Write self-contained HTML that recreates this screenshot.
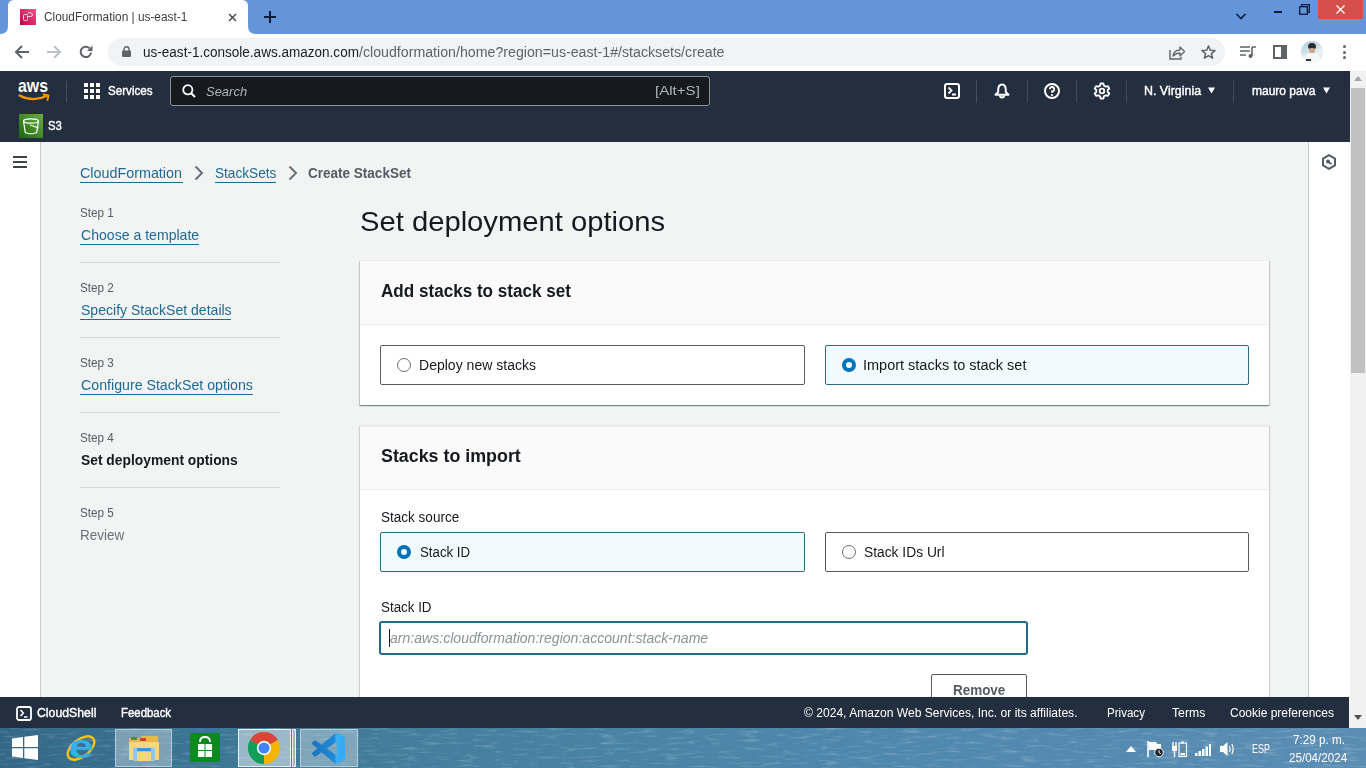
<!DOCTYPE html>
<html><head><meta charset="utf-8"><style>
*{margin:0;padding:0;box-sizing:border-box}
html,body{width:1366px;height:768px;overflow:hidden}
body{position:relative;background:#f2f3f3;font-family:"Liberation Sans",sans-serif}
.a{position:absolute}
.t{position:absolute;z-index:5;white-space:nowrap;transform-origin:0 0;font-family:"Liberation Sans",sans-serif}
svg{position:absolute;overflow:visible}
</style></head><body>
<!-- Chrome tab strip -->
<div class="a" style="left:0;top:0;width:1366px;height:34px;background:#6495da"></div>
<svg style="left:0;top:0" width="270" height="34"><path d="M0 34 Q8 34 8 26 L8 6 Q8 0 14 0 L242 0 Q248 0 248 6 L248 26 Q248 34 256 34 Z" fill="#fff"/></svg>
<!-- favicon -->
<svg style="left:20px;top:9px" width="16" height="16" viewBox="0 0 16 16"><defs><linearGradient id="fg" x1="0" y1="1" x2="1" y2="0"><stop offset="0" stop-color="#b0084d"/><stop offset="1" stop-color="#ff4f8b"/></linearGradient></defs><rect width="16" height="16" fill="url(#fg)"/><rect x="3.5" y="5.5" width="4" height="6" rx="1" fill="none" stroke="#ffd0e0" stroke-width="1"/><path d="M7.5 4.5 Q9 2.5 10.5 4 Q12.5 4 12.5 6 Q12.5 7.5 10.5 7.5 L7.5 7.5" fill="none" stroke="#ffd0e0" stroke-width="1"/></svg>
<!-- tab close -->
<svg style="left:228px;top:13px" width="9" height="9" viewBox="0 0 9 9"><path d="M1 1L8 8M8 1L1 8" stroke="#3c4043" stroke-width="1.4"/></svg>
<!-- new tab plus -->
<svg style="left:264px;top:11px" width="12" height="12" viewBox="0 0 12 12"><path d="M6 0V12M0 6H12" stroke="#0b1b3a" stroke-width="2"/></svg>
<!-- window controls -->
<svg style="left:1236px;top:13px" width="10" height="7" viewBox="0 0 10 7"><path d="M0.5 1L5 5.5L9.5 1" fill="none" stroke="#0b1b3a" stroke-width="1.6"/></svg>
<div class="a" style="left:1274px;top:11px;width:8px;height:2px;background:#0b1b3a"></div>
<svg style="left:1299px;top:4px" width="11" height="11" viewBox="0 0 11 11"><rect x="0.7" y="2.7" width="7.6" height="7.6" fill="none" stroke="#0b1b3a" stroke-width="1.3"/><path d="M2.7 2.7V0.7H10.3V8.3H8.3" fill="none" stroke="#0b1b3a" stroke-width="1.3"/></svg>
<div class="a" style="left:1318px;top:0;width:45px;height:19px;background:#d6504b"></div>
<svg style="left:1336px;top:5px" width="9" height="9" viewBox="0 0 9 9"><path d="M0.5 0.5L8.5 8.5M8.5 0.5L0.5 8.5" stroke="#fff" stroke-width="1.3"/></svg>
<!-- toolbar -->
<div class="a" style="left:0;top:34px;width:1366px;height:37px;background:#fff"></div>
<svg style="left:15px;top:45px" width="14" height="14" viewBox="0 0 14 14"><path d="M14 7H1.5M7 1L1 7L7 13" fill="none" stroke="#5f6368" stroke-width="2"/></svg>
<svg style="left:47px;top:45px" width="14" height="14" viewBox="0 0 14 14"><path d="M0 7H12.5M7 1L13 7L7 13" fill="none" stroke="#bdc1c6" stroke-width="2"/></svg>
<svg style="left:79px;top:45px" width="14" height="14" viewBox="0 0 14 14"><path d="M12 7.5A5.2 5.2 0 1 1 10.5 3.2" fill="none" stroke="#5f6368" stroke-width="2"/><path d="M13.5 0.5V6H8Z" fill="#5f6368"/></svg>
<div class="a" style="left:108px;top:38px;width:1117px;height:28px;border-radius:14px;background:#f1f3f4"></div>
<svg style="left:122px;top:46px" width="9" height="11" viewBox="0 0 9 11"><path d="M2 5V3.3A2.5 2.5 0 0 1 7 3.3V5" fill="none" stroke="#5f6368" stroke-width="1.4"/><rect x="0" y="4.5" width="9" height="6.5" rx="1" fill="#5f6368"/></svg>
<svg style="left:1169px;top:45px" width="16" height="15" viewBox="0 0 16 15"><path d="M1 5V14H12V12" fill="none" stroke="#5f6368" stroke-width="1.4"/><path d="M4 11Q5 5 11 5V2L15.5 6.5L11 11V8Q7 8 4 11Z" fill="none" stroke="#5f6368" stroke-width="1.3" stroke-linejoin="round"/></svg>
<svg style="left:1201px;top:45px" width="15" height="14" viewBox="0 0 15 14"><path d="M7.5 1L9.3 5.3L14 5.6L10.4 8.6L11.6 13.2L7.5 10.6L3.4 13.2L4.6 8.6L1 5.6L5.7 5.3Z" fill="none" stroke="#5f6368" stroke-width="1.5" stroke-linejoin="round"/></svg>
<svg style="left:1240px;top:46px" width="16" height="12" viewBox="0 0 16 12"><path d="M0 1H10M0 5H10M0 9H6M12 1H16M12 1V10" fill="none" stroke="#5f6368" stroke-width="1.6"/><circle cx="10.5" cy="10" r="2" fill="#5f6368"/></svg>
<svg style="left:1273px;top:45px" width="14" height="14" viewBox="0 0 14 14"><rect x="1" y="1" width="12" height="12" fill="none" stroke="#5f6368" stroke-width="2"/><rect x="8" y="1" width="5" height="12" fill="#5f6368"/></svg>
<div class="a" style="left:1301px;top:41px;width:22px;height:22px;border-radius:50%;overflow:hidden;background:linear-gradient(160deg,#a9c8de 0%,#cfe0ea 40%,#eef2f4 60%,#d8dee2 100%)"><div class="a" style="left:7px;top:2px;width:8px;height:6px;border-radius:4px 4px 2px 2px;background:#2b2b2b"></div><div class="a" style="left:8px;top:7px;width:6px;height:5px;border-radius:2px;background:#c9a58a"></div><div class="a" style="left:4px;top:12px;width:15px;height:12px;border-radius:6px 6px 0 0;background:#f4f6f7"></div><div class="a" style="left:5px;top:18px;width:5px;height:2px;background:#333"></div></div>
<div class="a" style="left:1343px;top:45px;width:3px;height:3px;border-radius:50%;background:#5f6368"></div>
<div class="a" style="left:1343px;top:51px;width:3px;height:3px;border-radius:50%;background:#5f6368"></div>
<div class="a" style="left:1343px;top:56px;width:3px;height:3px;border-radius:50%;background:#5f6368"></div>
<!-- AWS nav -->
<div class="a" style="left:0;top:71px;width:1350px;height:71px;background:#232f3e"></div>
<svg style="left:18px;top:80px" width="33" height="22" viewBox="0 0 33 22"><text x="0" y="12" font-family="Liberation Sans" font-weight="700" font-size="19" fill="#fff" textLength="30" lengthAdjust="spacingAndGlyphs">aws</text><path d="M1.5 15.5Q15 22.5 28.5 16" fill="none" stroke="#f90" stroke-width="2.2" stroke-linecap="round"/><path d="M25.5 14.5L30.5 15.5L29.5 20" fill="none" stroke="#f90" stroke-width="1.8" stroke-linecap="round"/></svg>
<div class="a" style="left:66px;top:81px;width:1px;height:21px;background:#414d5c"></div>
<svg style="left:84px;top:83px" width="16" height="16" viewBox="0 0 16 16" fill="#fff"><rect x="0" y="0" width="4" height="4"/><rect x="6" y="0" width="4" height="4"/><rect x="12" y="0" width="4" height="4"/><rect x="0" y="6" width="4" height="4"/><rect x="6" y="6" width="4" height="4"/><rect x="12" y="6" width="4" height="4"/><rect x="0" y="12" width="4" height="4"/><rect x="6" y="12" width="4" height="4"/><rect x="12" y="12" width="4" height="4"/></svg>
<div class="a" style="left:170px;top:76px;width:540px;height:30px;background:#16191f;border:1px solid #879596;border-radius:3px"></div>
<svg style="left:182px;top:84px" width="14" height="14" viewBox="0 0 14 14"><circle cx="5.8" cy="5.8" r="4.6" fill="none" stroke="#fff" stroke-width="1.8"/><path d="M9.2 9.2L13 13" stroke="#fff" stroke-width="2"/></svg>
<!-- right nav icons -->
<svg style="left:944px;top:83px" width="16" height="16" viewBox="0 0 16 16"><rect x="1" y="1" width="14" height="14" rx="2" fill="none" stroke="#fff" stroke-width="2"/><path d="M4.5 4.5L7.5 7.5L4.5 10.5M8 11.5H12" fill="none" stroke="#fff" stroke-width="1.8"/></svg>
<div class="a" style="left:976px;top:80px;width:1px;height:23px;background:#414d5c"></div>
<svg style="left:994px;top:83px" width="16" height="16" viewBox="0 0 16 16"><path d="M8 1.5C5 1.5 4.2 4.5 4.2 7V9L1.5 11.8H14.5L11.8 9V7C11.8 4.5 11 1.5 8 1.5Z" fill="none" stroke="#fff" stroke-width="2" stroke-linejoin="round"/><path d="M6 12.5A2 2 0 0 0 10 12.5" fill="none" stroke="#fff" stroke-width="2"/></svg>
<div class="a" style="left:1027px;top:80px;width:1px;height:23px;background:#414d5c"></div>
<svg style="left:1044px;top:83px" width="16" height="16" viewBox="0 0 16 16"><circle cx="8" cy="8" r="7" fill="none" stroke="#fff" stroke-width="2"/><path d="M5.8 6.2A2.2 2.2 0 1 1 8 8.4V9.8" fill="none" stroke="#fff" stroke-width="1.8"/><circle cx="8" cy="12" r="1.1" fill="#fff"/></svg>
<div class="a" style="left:1076px;top:80px;width:1px;height:23px;background:#414d5c"></div>
<svg style="left:1094px;top:83px" width="16" height="16" viewBox="0 0 16 16"><path d="M6.6 1H9.4L9.9 3.1L11.8 4.2L13.9 3.6L15.3 6L13.7 7.5V9.5L15.3 11L13.9 13.4L11.8 12.8L9.9 13.9L9.4 16H6.6L6.1 13.9L4.2 12.8L2.1 13.4L0.7 11L2.3 9.5V7.5L0.7 6L2.1 3.6L4.2 4.2L6.1 3.1Z" transform="translate(0 -0.5)" fill="none" stroke="#fff" stroke-width="1.8" stroke-linejoin="round"/><circle cx="8" cy="8" r="2.3" fill="none" stroke="#fff" stroke-width="1.8"/></svg>
<div class="a" style="left:1126px;top:80px;width:1px;height:23px;background:#414d5c"></div>
<svg style="left:1208px;top:87px" width="7" height="7" viewBox="0 0 7 7"><path d="M0 0.5H7L3.5 6.5Z" fill="#fff"/></svg>
<div class="a" style="left:1233px;top:80px;width:1px;height:23px;background:#414d5c"></div>
<svg style="left:1323px;top:87px" width="7" height="7" viewBox="0 0 7 7"><path d="M0 0.5H7L3.5 6.5Z" fill="#fff"/></svg>
<!-- S3 shortcut -->
<svg style="left:19px;top:114px" width="24" height="24" viewBox="0 0 24 24"><defs><linearGradient id="s3g" x1="0" y1="1" x2="1" y2="0"><stop offset="0" stop-color="#1b660f"/><stop offset="1" stop-color="#6cae3e"/></linearGradient></defs><rect width="24" height="24" fill="url(#s3g)"/><ellipse cx="12" cy="7" rx="7.5" ry="2.2" fill="none" stroke="#fff" stroke-width="1.2"/><path d="M4.5 7L6.3 18.5Q12 21 17.7 18.5L19.5 7" fill="none" stroke="#fff" stroke-width="1.2"/><path d="M11 11L19.5 14" stroke="#fff" stroke-width="1.2"/></svg>
<!-- left nav panel -->
<div class="a" style="left:0;top:142px;width:41px;height:555px;background:#fff;border-right:1px solid #c6cbcb"></div>
<svg style="left:13px;top:156px" width="14" height="12" viewBox="0 0 14 12"><path d="M0 1H14M0 6H14M0 11H14" stroke="#3f444a" stroke-width="2"/></svg>
<!-- right panel -->
<div class="a" style="left:1308px;top:142px;width:42px;height:555px;background:#fff;border-left:1px solid #c6cbcb"></div>
<svg style="left:1321px;top:154px" width="16" height="16" viewBox="0 0 16 16"><path d="M8 1.2L14 4.6V11.4L8 14.8L2 11.4V4.6Z" fill="none" stroke="#545b64" stroke-width="2" stroke-linejoin="round"/><circle cx="7" cy="7.4" r="2" fill="#545b64"/><path d="M7.5 8L10.5 10" stroke="#545b64" stroke-width="1.8"/></svg>
<!-- scrollbar -->
<div class="a" style="left:1350px;top:71px;width:16px;height:656px;background:#f1f1f1"></div>
<div class="a" style="left:1351px;top:88px;width:14px;height:285px;background:#c1c1c1"></div>
<svg style="left:1354px;top:76px" width="8" height="5" viewBox="0 0 8 5"><path d="M0 5H8L4 0Z" fill="#a3a3a3"/></svg>
<svg style="left:1354px;top:715px" width="8" height="5" viewBox="0 0 8 5"><path d="M0 0H8L4 5Z" fill="#505050"/></svg>
<!-- breadcrumb chevrons -->
<svg style="left:194px;top:165px" width="10" height="16" viewBox="0 0 10 16"><path d="M1.5 1.5L8 8L1.5 14.5" fill="none" stroke="#687078" stroke-width="2"/></svg>
<svg style="left:288px;top:165px" width="10" height="16" viewBox="0 0 10 16"><path d="M1.5 1.5L8 8L1.5 14.5" fill="none" stroke="#687078" stroke-width="2"/></svg>
<!-- link underlines -->
<div class="a" style="left:80px;top:182px;width:103px;height:1px;background:#1d6a93"></div>
<div class="a" style="left:215px;top:182px;width:61px;height:1px;background:#1d6a93"></div>
<div class="a" style="left:80px;top:244px;width:119px;height:1px;background:#1d6a93"></div>
<div class="a" style="left:80px;top:319px;width:151px;height:1px;background:#1d6a93"></div>
<div class="a" style="left:80px;top:394px;width:173px;height:1px;background:#1d6a93"></div>
<!-- step dividers -->
<div class="a" style="left:80px;top:262px;width:200px;height:1px;background:#d5dbdb"></div>
<div class="a" style="left:80px;top:337px;width:200px;height:1px;background:#d5dbdb"></div>
<div class="a" style="left:80px;top:412px;width:200px;height:1px;background:#d5dbdb"></div>
<div class="a" style="left:80px;top:487px;width:200px;height:1px;background:#d5dbdb"></div>
<!-- container 1 -->
<div class="a" style="left:360px;top:260px;width:909px;height:145px;background:#fff;border-top:1px solid #eaeded;box-shadow:0 1px 1px 0 rgba(0,28,36,.3),1px 1px 1px 0 rgba(0,28,36,.15),-1px 1px 1px 0 rgba(0,28,36,.15)"></div>
<div class="a" style="left:360px;top:261px;width:909px;height:64px;background:#fafafa;border-bottom:1px solid #eaeded"></div>
<div class="a" style="left:380px;top:345px;width:425px;height:40px;background:#fff;border:1px solid #545b64;border-radius:2px"></div>
<div class="a" style="left:825px;top:345px;width:424px;height:40px;background:#f1faff;border:1px solid #2b6e83;border-radius:2px"></div>
<div class="a" style="left:397px;top:358px;width:14px;height:14px;border-radius:50%;border:1.5px solid #687078;background:#fff"></div>
<div class="a" style="left:842px;top:358px;width:14px;height:14px;border-radius:50%;border:4px solid #0073bb;background:#fff"></div>
<!-- container 2 -->
<div class="a" style="left:360px;top:426px;width:909px;height:300px;background:#fff;border-top:1px solid #eaeded;box-shadow:1px 0 1px 0 rgba(0,28,36,.15),-1px 0 1px 0 rgba(0,28,36,.15)"></div>
<div class="a" style="left:360px;top:427px;width:909px;height:63px;background:#fafafa;border-bottom:1px solid #eaeded"></div>
<div class="a" style="left:380px;top:532px;width:425px;height:40px;background:#f1faff;border:1px solid #2b6e83;border-radius:2px"></div>
<div class="a" style="left:825px;top:532px;width:424px;height:40px;background:#fff;border:1px solid #545b64;border-radius:2px"></div>
<div class="a" style="left:397px;top:545px;width:14px;height:14px;border-radius:50%;border:4px solid #0073bb;background:#fff"></div>
<div class="a" style="left:842px;top:545px;width:14px;height:14px;border-radius:50%;border:1.5px solid #687078;background:#fff"></div>
<div class="a" style="left:379px;top:621px;width:649px;height:34px;background:#fff;border:2px solid #216b86;border-radius:3px"></div>
<div class="a" style="left:389px;top:629px;width:1px;height:18px;background:#16191f"></div>
<div class="a" style="left:931px;top:674px;width:96px;height:40px;background:#fff;border:1px solid #545b64;border-radius:2px"></div>
<!-- AWS footer -->
<div class="a" style="left:0;top:697px;width:1349px;height:31px;background:#232f3e;z-index:4"></div>
<svg style="left:16px;top:706px;z-index:4" width="16" height="15" viewBox="0 0 16 15"><rect x="1" y="1" width="14" height="13" rx="2" fill="none" stroke="#fff" stroke-width="1.8"/><path d="M4.5 4L7.3 7L4.5 10M8 11H11.5" fill="none" stroke="#fff" stroke-width="1.6"/></svg>
<!-- taskbar -->
<div class="a" style="left:0;top:728px;width:1366px;height:40px;z-index:4;background:linear-gradient(90deg,#356888 0%,#3f7a98 20%,#4682a2 40%,#5088ad 65%,#5b8db3 100%)"></div>
<svg style="left:0;top:728px;z-index:4" width="1366" height="40"><filter id="nz" x="0" y="0" width="100%" height="100%"><feTurbulence type="fractalNoise" baseFrequency="0.05 0.35" numOctaves="3" seed="7"/><feColorMatrix values="0 0 0 0 1  0 0 0 0 1  0 0 0 0 1  0 0 0 1.6 -0.85"/></filter><rect width="1366" height="40" filter="url(#nz)" opacity="0.35"/></svg>
<!-- taskbar items -->
<svg style="left:12px;top:735px;z-index:5" width="26" height="25" viewBox="0 0 26 25" fill="#fff"><path d="M0 3.5L11 2V12H0Z"/><path d="M12.3 1.8L26 0V12H12.3Z"/><path d="M0 13.2H11V23L0 21.5Z"/><path d="M12.3 13.2H26V25L12.3 23.2Z"/></svg>
<svg style="left:64px;top:732px;z-index:5" width="34" height="32" viewBox="0 0 34 32"><ellipse cx="17" cy="16" rx="15.5" ry="8.5" transform="rotate(-38 17 16)" fill="none" stroke="#f3c419" stroke-width="2.4"/><text x="4.5" y="26" font-family="Liberation Sans" font-weight="700" font-size="33" fill="#37aee8" textLength="25" lengthAdjust="spacingAndGlyphs">e</text></svg>
<div class="a" style="left:115px;top:729px;width:57px;height:38px;z-index:5;background:rgba(215,225,230,.42);border:1px solid rgba(255,255,255,.45)"></div>
<svg style="left:128px;top:734px;z-index:6" width="32" height="28" viewBox="0 0 32 28"><path d="M1 4H12L14 2H30V20H1Z" fill="#e8b84a"/><rect x="3" y="3" width="6" height="3" fill="#3c9a3c"/><rect x="12" y="4" width="6" height="3" fill="#c94040"/><path d="M1 8H31V26H1Z" fill="#f6d77c"/><path d="M5 14H27V27H5Z" fill="#8fc8ec"/><rect x="9" y="18" width="14" height="9" fill="#f6d77c"/><rect x="9" y="14" width="14" height="3" fill="#3a95d9"/></svg>
<svg style="left:190px;top:733px;z-index:5" width="30" height="29" viewBox="0 0 30 29"><rect width="30" height="29" fill="#0b8a1e"/><path d="M10 9Q10 4 15 4Q20 4 20 9" fill="none" stroke="#fff" stroke-width="1.8"/><rect x="8" y="11" width="6.5" height="6" fill="#fff"/><rect x="15.5" y="11" width="6.5" height="6" fill="#fff"/><rect x="8" y="18" width="6.5" height="6" fill="#fff"/><rect x="15.5" y="18" width="6.5" height="6" fill="#fff"/></svg>
<div class="a" style="left:238px;top:729px;width:53px;height:38px;z-index:5;background:rgba(215,225,230,.6);border:1px solid rgba(255,255,255,.8)"></div>
<div class="a" style="left:292px;top:729px;width:4px;height:38px;z-index:5;background:rgba(215,225,230,.6);border:1px solid rgba(255,255,255,.8)"></div>
<svg style="left:248px;top:732px;z-index:6" width="32" height="32" viewBox="0 0 32 32"><path d="M16 16L29.9 8A16 16 0 0 0 2.1 8Z" fill="#db4437"/><path d="M16 16L2.1 8A16 16 0 0 0 16 32Z" fill="#0f9d58"/><path d="M16 16L16 32A16 16 0 0 0 29.9 8Z" fill="#f4b400"/><circle cx="16" cy="16" r="7.2" fill="#fff"/><circle cx="16" cy="16" r="5.6" fill="#4285f4"/></svg>
<div class="a" style="left:300px;top:729px;width:58px;height:38px;z-index:5;background:rgba(215,225,230,.42);border:1px solid rgba(255,255,255,.45)"></div>
<svg style="left:312px;top:733px;z-index:6" width="33" height="31" viewBox="0 0 100 100" preserveAspectRatio="none"><defs><linearGradient id="vsg" x1="0" y1="0" x2="1" y2="0"><stop offset="0" stop-color="#1a74c0"/><stop offset="0.7" stop-color="#1f8ad8"/><stop offset="0.72" stop-color="#3bb0f5"/><stop offset="1" stop-color="#35a9f0"/></linearGradient></defs><path d="M96.46 10.8L75.86 0.87C73.48 -0.28 70.6 0.21 68.74 2.07L29.3 38.05L12.12 25.01C10.52 23.79 8.28 23.89 6.8 25.24L1.29 30.25C-0.53 31.9 -0.53 34.76 1.28 36.41L16.18 50L1.28 63.59C-0.53 65.24 -0.53 68.1 1.29 69.75L6.8 74.76C8.28 76.11 10.52 76.21 12.12 74.99L29.3 61.95L68.74 97.93C70.6 99.79 73.48 100.28 75.86 99.13L96.46 89.2C98.62 88.16 100 85.97 100 83.57V16.43C100 14.03 98.62 11.84 96.46 10.8ZM75.02 72.7L45.1 50L75.02 27.3Z" fill="url(#vsg)"/></svg>
<!-- tray -->
<svg style="left:1126px;top:746px;z-index:5" width="10" height="6" viewBox="0 0 10 6"><path d="M0 6H10L5 0Z" fill="#fff"/></svg>
<svg style="left:1147px;top:741px;z-index:5" width="17" height="16" viewBox="0 0 17 16"><path d="M1 0V16" stroke="#fff" stroke-width="1.6"/><path d="M2 1H9L10 3H14V9H2Z" fill="#fff"/><circle cx="12" cy="11.5" r="4.3" fill="#1b2530" stroke="#fff" stroke-width="1"/><path d="M12 9V11.5L13.8 12.8" stroke="#fff" stroke-width="1" fill="none"/></svg>
<svg style="left:1172px;top:741px;z-index:5" width="15" height="16" viewBox="0 0 15 16"><path d="M1 1V5M4 1V5" stroke="#fff" stroke-width="1.4"/><rect x="0" y="5" width="5" height="5" fill="#fff"/><path d="M2.5 10V16" stroke="#fff" stroke-width="1.4"/><rect x="7" y="2" width="7.5" height="13.5" fill="none" stroke="#fff" stroke-width="1.2"/><rect x="9.5" y="0.5" width="2.5" height="2" fill="#fff"/><rect x="8.5" y="12" width="4.5" height="2.3" fill="#fff"/></svg>
<svg style="left:1195px;top:744px;z-index:5" width="16" height="12" viewBox="0 0 16 12" fill="#fff"><rect x="0" y="9" width="2.5" height="3"/><rect x="3.5" y="7" width="2.5" height="5"/><rect x="7" y="5" width="2.5" height="7"/><rect x="10.5" y="2.5" width="2.5" height="9.5"/><rect x="14" y="0" width="2" height="12"/></svg>
<svg style="left:1219px;top:741px;z-index:5" width="16" height="16" viewBox="0 0 16 16"><path d="M1 5H4L8.5 1V15L4 11H1Z" fill="#fff"/><path d="M10.5 5Q12 8 10.5 11M12.8 3Q15.5 8 12.8 13" fill="none" stroke="#fff" stroke-width="1.2"/></svg>

<span class="t" id="t_tab" style="left:44.30px;top:11.00px;font-size:12.5px;line-height:12.5px;font-weight:400;font-style:normal;color:#3c4043;transform:scaleX(0.9473)">CloudFormation | us-east-1</span>
<span class="t" id="t_url1" style="left:142.50px;top:45.00px;font-size:14px;line-height:14px;font-weight:400;font-style:normal;color:#202124;transform:scaleX(0.9669)">us-east-1.console.aws.amazon.com</span>
<span class="t" id="t_url2" style="left:358.60px;top:45.00px;font-size:14px;line-height:14px;font-weight:400;font-style:normal;color:#5f6368;transform:scaleX(1.0133)">/cloudformation/home?region=us-east-1#/stacksets/create</span>
<span class="t" id="t_services" style="-webkit-text-stroke:0.4px #ffffff;left:108.00px;top:84.00px;font-size:13px;line-height:13px;font-weight:400;font-style:normal;color:#ffffff;transform:scaleX(0.8938)">Services</span>
<span class="t" id="t_search" style="left:206.00px;top:85.00px;font-size:13.5px;line-height:13.5px;font-weight:400;font-style:italic;color:#aab7b8;transform:scaleX(0.9606)">Search</span>
<span class="t" id="t_alts" style="left:655.30px;top:84.00px;font-size:13.5px;line-height:13.5px;font-weight:400;font-style:normal;color:#aab7b8;transform:scaleX(1.1169)">[Alt+S]</span>
<span class="t" id="t_region" style="-webkit-text-stroke:0.4px #ffffff;left:1143.81px;top:85.00px;font-size:12.5px;line-height:12.5px;font-weight:400;font-style:normal;color:#ffffff;transform:scaleX(0.9932)">N. Virginia</span>
<span class="t" id="t_user" style="-webkit-text-stroke:0.4px #ffffff;left:1251.60px;top:85.00px;font-size:12.5px;line-height:12.5px;font-weight:400;font-style:normal;color:#ffffff;transform:scaleX(0.9598)">mauro pava</span>
<span class="t" id="t_s3" style="-webkit-text-stroke:0.4px #ffffff;left:48.00px;top:119.00px;font-size:13.4px;line-height:13.4px;font-weight:400;font-style:normal;color:#ffffff;transform:scaleX(0.8474)">S3</span>
<span class="t" id="t_bc1" style="left:80.30px;top:166.00px;font-size:14.5px;line-height:14.5px;font-weight:400;font-style:normal;color:#1d6a93;transform:scaleX(0.9884)">CloudFormation</span>
<span class="t" id="t_bc2" style="left:214.80px;top:166.00px;font-size:14.5px;line-height:14.5px;font-weight:400;font-style:normal;color:#1d6a93;transform:scaleX(0.9396)">StackSets</span>
<span class="t" id="t_bc3" style="left:308.40px;top:166.00px;font-size:14.5px;line-height:14.5px;font-weight:700;font-style:normal;color:#545b64;transform:scaleX(0.9323)">Create StackSet</span>
<span class="t" id="t_h1" style="left:360.46px;top:208.00px;font-size:28px;line-height:28px;font-weight:400;font-style:normal;color:#16191f;transform:scaleX(1.0426)">Set deployment options</span>
<span class="t" id="t_c1h" style="left:380.70px;top:282.00px;font-size:18px;line-height:18px;font-weight:700;font-style:normal;color:#16191f;transform:scaleX(0.9491)">Add stacks to stack set</span>
<span class="t" id="t_r1" style="left:418.50px;top:358.00px;font-size:14px;line-height:14px;font-weight:400;font-style:normal;color:#16191f;transform:scaleX(1.0024)">Deploy new stacks</span>
<span class="t" id="t_r2" style="left:863.27px;top:358.00px;font-size:14px;line-height:14px;font-weight:400;font-style:normal;color:#16191f;transform:scaleX(1.0347)">Import stacks to stack set</span>
<span class="t" id="t_c2h" style="left:380.50px;top:447.00px;font-size:18px;line-height:18px;font-weight:700;font-style:normal;color:#16191f;transform:scaleX(0.9912)">Stacks to import</span>
<span class="t" id="t_ss" style="left:380.50px;top:510.00px;font-size:14px;line-height:14px;font-weight:400;font-style:normal;color:#16191f;transform:scaleX(0.9663)">Stack source</span>
<span class="t" id="t_r3" style="left:420.00px;top:545.00px;font-size:14px;line-height:14px;font-weight:400;font-style:normal;color:#16191f;transform:scaleX(0.9471)">Stack ID</span>
<span class="t" id="t_r4" style="left:864.30px;top:545.00px;font-size:14px;line-height:14px;font-weight:400;font-style:normal;color:#16191f;transform:scaleX(0.9857)">Stack IDs Url</span>
<span class="t" id="t_sid" style="left:380.50px;top:600.00px;font-size:14px;line-height:14px;font-weight:400;font-style:normal;color:#16191f;transform:scaleX(0.9547)">Stack ID</span>
<span class="t" id="t_ph" style="left:389.50px;top:631.00px;font-size:14px;line-height:14px;font-weight:400;font-style:italic;color:#879596;transform:scaleX(1.0046)">arn:aws:cloudformation:region:account:stack-name</span>
<span class="t" id="t_remove" style="left:952.70px;top:683.00px;font-size:14px;line-height:14px;font-weight:700;font-style:normal;color:#545b64;transform:scaleX(0.9601)">Remove</span>
<span class="t" id="t_fcs" style="-webkit-text-stroke:0.4px #ffffff;left:37.20px;top:707.00px;font-size:12.5px;line-height:12.5px;font-weight:400;font-style:normal;color:#ffffff;transform:scaleX(0.9819)">CloudShell</span>
<span class="t" id="t_ffb" style="-webkit-text-stroke:0.4px #ffffff;left:120.59px;top:707.00px;font-size:12.5px;line-height:12.5px;font-weight:400;font-style:normal;color:#ffffff;transform:scaleX(0.9113)">Feedback</span>
<span class="t" id="t_fcopy" style="left:803.60px;top:707.00px;font-size:12.5px;line-height:12.5px;font-weight:400;font-style:normal;color:#ffffff;transform:scaleX(0.9658)">© 2024, Amazon Web Services, Inc. or its affiliates.</span>
<span class="t" id="t_fpriv" style="left:1107.27px;top:707.00px;font-size:12.5px;line-height:12.5px;font-weight:400;font-style:normal;color:#ffffff;transform:scaleX(0.9256)">Privacy</span>
<span class="t" id="t_fterms" style="left:1171.70px;top:707.00px;font-size:12.5px;line-height:12.5px;font-weight:400;font-style:normal;color:#ffffff;transform:scaleX(0.9770)">Terms</span>
<span class="t" id="t_fcookie" style="left:1229.60px;top:707.00px;font-size:12.5px;line-height:12.5px;font-weight:400;font-style:normal;color:#ffffff;transform:scaleX(0.9598)">Cookie preferences</span>
<span class="t" id="t_esp" style="left:1251.50px;top:743.00px;font-size:12px;line-height:12px;font-weight:400;font-style:normal;color:#ffffff;transform:scaleX(0.7456)">ESP</span>
<span class="t" id="t_time" style="left:1292.80px;top:734.00px;font-size:12px;line-height:12px;font-weight:400;font-style:normal;color:#ffffff;transform:scaleX(0.9731)">7:29 p. m.</span>
<span class="t" id="t_date" style="left:1288.90px;top:752.00px;font-size:12px;line-height:12px;font-weight:400;font-style:normal;color:#ffffff;transform:scaleX(0.9671)">25/04/2024</span>
<span class="t" id="t_step1" style="left:80.00px;top:207.00px;font-size:12px;line-height:12px;font-weight:400;font-style:normal;color:#545b64;transform:scaleX(0.9766)">Step 1</span>
<span class="t" id="t_stepl1" style="left:80.50px;top:228.00px;font-size:14.3px;line-height:14.3px;font-weight:400;font-style:normal;color:#1d6a93;transform:scaleX(0.9845)">Choose a template</span>
<span class="t" id="t_step2" style="left:80.00px;top:282.00px;font-size:12px;line-height:12px;font-weight:400;font-style:normal;color:#545b64;transform:scaleX(0.9766)">Step 2</span>
<span class="t" id="t_stepl2" style="left:80.50px;top:303.00px;font-size:14.3px;line-height:14.3px;font-weight:400;font-style:normal;color:#1d6a93;transform:scaleX(0.9822)">Specify StackSet details</span>
<span class="t" id="t_step3" style="left:80.00px;top:357.00px;font-size:12px;line-height:12px;font-weight:400;font-style:normal;color:#545b64;transform:scaleX(0.9766)">Step 3</span>
<span class="t" id="t_stepl3" style="left:80.50px;top:378.00px;font-size:14.3px;line-height:14.3px;font-weight:400;font-style:normal;color:#1d6a93;transform:scaleX(0.9925)">Configure StackSet options</span>
<span class="t" id="t_step4" style="left:80.00px;top:432.00px;font-size:12px;line-height:12px;font-weight:400;font-style:normal;color:#545b64;transform:scaleX(0.9766)">Step 4</span>
<span class="t" id="t_stepl4" style="left:80.50px;top:453.00px;font-size:14.3px;line-height:14.3px;font-weight:700;font-style:normal;color:#16191f;transform:scaleX(0.9674)">Set deployment options</span>
<span class="t" id="t_step5" style="left:80.00px;top:507.00px;font-size:12px;line-height:12px;font-weight:400;font-style:normal;color:#545b64;transform:scaleX(0.9766)">Step 5</span>
<span class="t" id="t_stepl5" style="left:79.55px;top:528.00px;font-size:14.3px;line-height:14.3px;font-weight:400;font-style:normal;color:#687078;transform:scaleX(0.9452)">Review</span>
</body></html>
